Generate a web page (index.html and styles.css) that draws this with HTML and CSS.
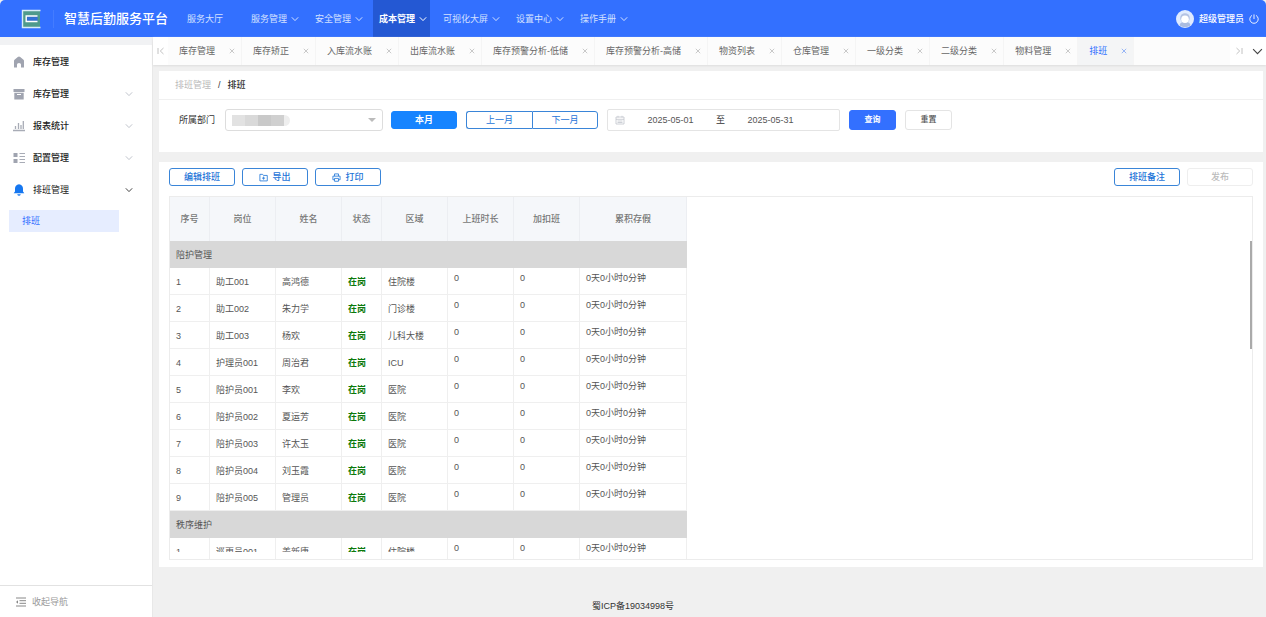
FILE: index.html
```html
<!DOCTYPE html>
<html lang="zh-CN">
<head>
  <meta charset="UTF-8">
  <meta name="viewport" content="width=device-width, initial-scale=1.0">
  <title>智慧后勤服务平台</title>
  <link rel="stylesheet" href="styles.css">
</head>
<body>
  <svg class="symbols" aria-hidden="true">
    <symbol id="down" viewBox="0 0 8 8"><path d="M0.8 2.3 4 5.6 7.2 2.3" fill="none" stroke="currentColor"/></symbol>
    <symbol id="close" viewBox="0 0 6 6"><path d="M0.8 0.8 5.2 5.2M5.2 0.8 0.8 5.2" fill="none" stroke="currentColor" stroke-width="0.8"/></symbol>
  </svg>
  <header class="header">
    <svg class="logo" viewBox="0 0 20 20">
      <rect x="2" y="2" width="17" height="16" fill="#4e9a8c"/>
      <path d="M19.5 1.5H1.5V18.5H19.5" fill="none" stroke="#d8ecf8" stroke-width="1.4"/>
      <path d="M16.5 7H5.2V12.5H16.5" fill="#3471c8" stroke="#fff" stroke-width="1.4"/>
      <path d="M7 9.8H16.5" stroke="#3471e8"/>
    </svg>
    <h1 class="title">智慧后勤服务平台</h1>
    <nav class="nav">
      <a href="#">服务大厅</a>
      <a href="#">服务管理<svg class="arrow"><use href="#down"/></svg></a>
      <a href="#">安全管理<svg class="arrow"><use href="#down"/></svg></a>
      <a href="#" class="active">成本管理<svg class="arrow"><use href="#down"/></svg></a>
      <a href="#">可视化大屏<svg class="arrow"><use href="#down"/></svg></a>
      <a href="#">设置中心<svg class="arrow"><use href="#down"/></svg></a>
      <a href="#">操作手册<svg class="arrow"><use href="#down"/></svg></a>
    </nav>
    <div class="user">
      <svg class="avatar" viewBox="0 0 18 18">
        <circle cx="9" cy="9" r="9" fill="#dfebff"/>
        <path d="M3.5 15.5Q4 11.8 9 11.8T14.5 15.5Q9 19 3.5 15.5Z" fill="#a9bbe0"/>
        <circle cx="9" cy="8" r="4.8" fill="#b4c3e3"/>
        <circle cx="9" cy="9.2" r="3.8" fill="#fff"/>
      </svg>
      <span>超级管理员</span>
      <button class="power" aria-label="退出">
        <svg viewBox="0 0 10 10"><path d="M3 1.4A4.2 4.2 0 1 0 7 1.4M5 0.4V5" fill="none" stroke="#fff" stroke-width="0.9"/></svg>
      </button>
    </div>
  </header>

  <div class="body">
    <aside class="side">
      <ul class="menu">
        <li><a href="#">
          <svg class="icon" viewBox="0 0 12 12"><path d="M6 0.5Q6.6 0.5 7.2 1L10.5 3.8Q11 4.2 11 5V11.5H8V8.5Q8 7 6 7T4 8.5V11.5H1V5Q1 4.2 1.5 3.8L4.8 1Q5.4 0.5 6 0.5Z" fill="#a0a4b0"/></svg>库存管理</a></li>
        <li><a href="#">
          <svg class="icon" viewBox="0 0 12 12"><path d="M0.5 1H11.5V4H0.5ZM1.3 4.8H10.7V11.5H1.3Z" fill="#a0a4b0"/><path d="M4 6.5H8" stroke="#fff"/></svg>库存管理<svg class="arrow"><use href="#down"/></svg></a></li>
        <li><a href="#">
          <svg class="icon" viewBox="0 0 12 12"><path d="M0 10.5H12M2.5 9V6M5.5 9V3M8 9V5M10.3 9V1" fill="none" stroke="#a8acb6" stroke-width="1.3"/></svg>报表统计<svg class="arrow"><use href="#down"/></svg></a></li>
        <li><a href="#">
          <svg class="icon" viewBox="0 0 12 12"><path d="M0.5 1H4.5V5H0.5ZM0.5 7H4.5V11H0.5Z" fill="#a0a4b0"/><path d="M6.5 1.5H12M6.5 4.5H12M6.5 7.5H12M6.5 10.5H12" stroke="#a8acb6"/></svg>配置管理<svg class="arrow"><use href="#down"/></svg></a></li>
        <li class="open"><a href="#">
          <svg class="icon" viewBox="0 0 12 12"><path d="M6 0.3C8.6 0.6 10 2.3 10 4.8V7.5L11.3 9.3H0.7L2 7.5V4.8C2 2.3 3.4 0.6 6 0.3ZM4.2 10.2H7.8Q7.3 11.8 6 11.8T4.2 10.2Z" fill="#1677f0"/></svg>排班管理<svg class="arrow"><use href="#down"/></svg></a></li>
      </ul>
      <a href="#" class="sub">排班</a>
      <button class="fold">
        <svg viewBox="0 0 12 10"><path d="M1 1H11M4.5 3.7H11M4.5 6.3H11M1 9H11" stroke="#888"/><path d="M3 3.2V6.8L1 5Z" fill="#888"/></svg>收起导航
      </button>
    </aside>

    <main class="main">
      <div class="tabs">
        <button class="tab-prev" aria-label="向前"><svg viewBox="0 0 8 8"><path d="M1 1V7M6.5 1 3.3 4 6.5 7" fill="none" stroke="#bbb" stroke-width="0.9"/></svg></button>
        <a href="#" class="tab">库存管理<svg><use href="#close"/></svg></a>
        <a href="#" class="tab">库存矫正<svg><use href="#close"/></svg></a>
        <a href="#" class="tab">入库流水账<svg><use href="#close"/></svg></a>
        <a href="#" class="tab">出库流水账<svg><use href="#close"/></svg></a>
        <a href="#" class="tab">库存预警分析-低储<svg><use href="#close"/></svg></a>
        <a href="#" class="tab">库存预警分析-高储<svg><use href="#close"/></svg></a>
        <a href="#" class="tab">物资列表<svg><use href="#close"/></svg></a>
        <a href="#" class="tab">仓库管理<svg><use href="#close"/></svg></a>
        <a href="#" class="tab">一级分类<svg><use href="#close"/></svg></a>
        <a href="#" class="tab">二级分类<svg><use href="#close"/></svg></a>
        <a href="#" class="tab">物料管理<svg><use href="#close"/></svg></a>
        <a href="#" class="tab current">排班<svg><use href="#close"/></svg></a>
        <button class="tab-next" aria-label="向后"><svg viewBox="0 0 8 8"><path d="M7 1V7M1.5 1 4.7 4 1.5 7" fill="none" stroke="#bbb" stroke-width="0.9"/></svg></button>
        <button class="tab-more" aria-label="更多"><svg viewBox="0 0 8 8"><path d="M0.8 2.3 4 5.6 7.2 2.3" fill="none" stroke="#444" stroke-width="0.8"/></svg></button>
      </div>

      <section class="card search">
        <div class="crumb"><a href="#">排班管理</a><span>/</span><b>排班</b></div>
        <form class="filter">
          <label for="dept">所属部门</label>
          <div class="select">
            <select id="dept"><option></option></select>
            <span class="mask"><i></i><i></i><i></i><i></i><i></i></span>
          </div>
          <button type="button" class="btn month">本月</button>
          <div class="group">
            <button type="button" class="btn">上一月</button>
            <button type="button" class="btn">下一月</button>
          </div>
          <div class="range">
            <svg viewBox="0 0 10 10"><path d="M1 2H9V9H1ZM1 4.3H9M3 0.8V2.5M7 0.8V2.5M2.5 6H7.5M2.5 7.5H7.5" fill="none" stroke="#c0c4cc" stroke-width="0.8"/></svg>
            <input type="text" value="2025-05-01" aria-label="开始日期">
            <span>至</span>
            <input type="text" value="2025-05-31" aria-label="结束日期">
          </div>
          <button type="button" class="query">查询</button>
          <button type="button" class="query reset">重置</button>
        </form>
      </section>

      <section class="card content">
        <div class="tools">
          <button class="btn">编辑排班</button>
          <button class="btn"><svg viewBox="0 0 10 10"><path d="M1 1.5H4L5 2.7H9.2V8.8H1ZM5.1 4V7.4M3.4 5.7H6.8" fill="none" stroke="currentColor" stroke-width="0.9"/></svg>导出</button>
          <button class="btn"><svg viewBox="0 0 10 10"><path d="M2.8 3.5V1H7.2V3.5M2.8 7.5H1V3.5H9V7.5H7.2M2.8 6H7.2V9.2H2.8Z" fill="none" stroke="currentColor" stroke-width="0.9"/></svg>打印</button>
          <button class="btn note">排班备注</button>
          <button class="btn" disabled>发布</button>
        </div>
        <div class="table-box">
          <table class="table">
            <colgroup>
              <col class="w-s"><col class="w-m"><col class="w-m"><col class="w-s"><col class="w-m"><col class="w-m"><col class="w-m"><col class="w-l">
            </colgroup>
            <thead>
              <tr><th>序号</th><th>岗位</th><th>姓名</th><th>状态</th><th>区域</th><th>上班时长</th><th>加扣班</th><th>累积存假</th></tr>
            </thead>
            <tbody>
              <tr class="type"><td colspan="8">陪护管理</td></tr>
              <tr><td>1</td><td>助工001</td><td>高鸿德</td><td class="on">在岗</td><td>住院楼</td><td class="num">0</td><td class="num">0</td><td class="num">0天0小时0分钟</td></tr>
              <tr><td>2</td><td>助工002</td><td>朱力学</td><td class="on">在岗</td><td>门诊楼</td><td class="num">0</td><td class="num">0</td><td class="num">0天0小时0分钟</td></tr>
              <tr><td>3</td><td>助工003</td><td>杨欢</td><td class="on">在岗</td><td>儿科大楼</td><td class="num">0</td><td class="num">0</td><td class="num">0天0小时0分钟</td></tr>
              <tr><td>4</td><td>护理员001</td><td>周治君</td><td class="on">在岗</td><td>ICU</td><td class="num">0</td><td class="num">0</td><td class="num">0天0小时0分钟</td></tr>
              <tr><td>5</td><td>陪护员001</td><td>李欢</td><td class="on">在岗</td><td>医院</td><td class="num">0</td><td class="num">0</td><td class="num">0天0小时0分钟</td></tr>
              <tr><td>6</td><td>陪护员002</td><td>夏运芳</td><td class="on">在岗</td><td>医院</td><td class="num">0</td><td class="num">0</td><td class="num">0天0小时0分钟</td></tr>
              <tr><td>7</td><td>陪护员003</td><td>许太玉</td><td class="on">在岗</td><td>医院</td><td class="num">0</td><td class="num">0</td><td class="num">0天0小时0分钟</td></tr>
              <tr><td>8</td><td>陪护员004</td><td>刘玉霞</td><td class="on">在岗</td><td>医院</td><td class="num">0</td><td class="num">0</td><td class="num">0天0小时0分钟</td></tr>
              <tr><td>9</td><td>陪护员005</td><td>管理员</td><td class="on">在岗</td><td>医院</td><td class="num">0</td><td class="num">0</td><td class="num">0天0小时0分钟</td></tr>
              <tr class="type"><td colspan="8">秩序维护</td></tr>
              <tr class="cut"><td><span>1</span></td><td><span>巡更员001</span></td><td><span>姜新唐</span></td><td class="on"><span>在岗</span></td><td><span>住院楼</span></td><td class="num">0</td><td class="num">0</td><td class="num">0天0小时0分钟</td></tr>
            </tbody>
          </table>
          <div class="thumb"></div>
        </div>
      </section>
      <footer class="footer">蜀ICP备19034998号</footer>
    </main>
  </div>
</body>
</html>
```

FILE: styles.css
```css
*{
  box-sizing: border-box;
}

body{
  display: flex;
  flex-direction: column;
  height: 100vh;
  margin: 0;
  overflow: hidden;
  font: 9px/14px "Liberation Sans", "Noto Sans CJK SC", sans-serif;
  color: #333;
  background-color: #f0f0f0;
}

a{
  color: inherit;
  text-decoration: none;
}

ul{
  padding: 0;
  margin: 0;
  list-style: none;
}

button, input, select{
  padding: 0;
  margin: 0;
  border: 0;
  background: none;
  font: inherit;
  color: inherit;
}

.symbols{
  position: absolute;
  width: 0;
  height: 0;
}

.arrow{
  width: 8px;
  height: 8px;
}

/* 顶部 */
.header{
  display: flex;
  flex: none;
  align-items: center;
  height: 37px;
  padding: 0 7px 0 21px;
  border-radius: 5px 5px 0 0;
  background-color: #3370ff;
  color: #fff;
}

.logo{
  width: 20px;
  height: 20px;
}

.title{
  margin: 0 0 0 12px;
  padding-left: 10px;
  border-left: 1px solid #447cff;
  font-size: 13px;
  line-height: 18px;
  font-weight: 500;
}

.nav{
  display: flex;
  gap: 7px;
  height: 100%;
  margin-left: 13px;
}

.nav a{
  display: flex;
  align-items: center;
  gap: 4px;
  min-width: 57px;
  padding: 0 3px 0 6px;
  color: #d3e1ff;
}

.nav .active{
  background-color: #2458d3;
  color: #fff;
  font-weight: bold;
}

.user{
  display: flex;
  align-items: center;
  gap: 5px;
  margin-left: auto;
  font-weight: 500;
}

.avatar{
  width: 18px;
  height: 18px;
}

.power, .power svg{
  display: block;
  width: 10px;
  height: 10px;
}

.body{
  display: flex;
  flex: 1;
  min-height: 0;
}

/* 左侧菜单 */
.side{
  display: flex;
  flex: none;
  flex-direction: column;
  width: 153px;
  border-top: 8px solid #f1f2f4;
  border-right: 1px solid #e8e8e8;
  background-color: #fff;
}

.menu{
  padding-top: 1px;
}

.menu a{
  display: flex;
  align-items: center;
  height: 32px;
  padding: 0 19px 0 13px;
  color: #222;
  font-weight: 500;
}

.menu .icon{
  width: 12px;
  height: 12px;
  margin-right: 8px;
}

.menu .arrow{
  margin-left: auto;
  color: #c0c4cc;
}

.menu .open a{
  font-weight: normal;
}

.menu .open .arrow{
  color: #444;
}

.sub{
  height: 22px;
  margin: 4px 33px 0 9px;
  padding-left: 13px;
  line-height: 22px;
  background-color: #e6edff;
  color: #3370ff;
}

.fold{
  display: flex;
  align-items: center;
  gap: 5px;
  height: 32px;
  margin-top: auto;
  padding-left: 15px;
  border-top: 1px solid #e2e2e2;
  color: #999;
}

.fold svg{
  width: 12px;
  height: 10px;
}

/* 标签页 */
.main{
  display: flex;
  flex: 1;
  flex-direction: column;
  min-width: 0;
}

.tabs{
  display: flex;
  flex: none;
  height: 28px;
  background-color: #fcfcfc;
  box-shadow: 0 1px 2px #ddd;
}

.tabs svg{
  width: 6px;
  height: 6px;
  color: #bbb;
}

.tab{
  display: flex;
  align-items: center;
  gap: 14px;
  padding: 0 6px 0 11px;
  border-right: 1px solid #f5f5f5;
  color: #666;
  white-space: nowrap;
}

.tabs .current{
  background-color: #f4f5f6;
  color: #3370ff;
}

.tabs .current svg{
  color: #7fa5f5;
}

.tabs button{
  display: flex;
  flex: none;
  align-items: center;
  justify-content: center;
  width: 18px;
  background-color: #fff;
}

.tabs button svg{
  width: 8px;
  height: 8px;
}

.tabs .tab-prev{
  width: 15px;
}

.tabs .tab-next{
  margin-left: auto;
}

.tabs .tab-more svg{
  width: 11px;
  height: 11px;
}

/* 查询 */
.card{
  margin: 0 3px 0 6px;
  background-color: #fff;
}

.search{
  flex: none;
  height: 81px;
  margin-top: 6px;
}

.crumb{
  display: flex;
  gap: 7px;
  height: 29px;
  padding-left: 16px;
  border-bottom: 1px solid #f0f0f0;
  line-height: 28px;
}

.crumb a{
  color: #bbb;
}

.crumb b{
  font-weight: 500;
}

.filter{
  display: flex;
  align-items: center;
  height: 40px;
  padding-left: 20px;
}

.select{
  position: relative;
  width: 158px;
  height: 22px;
  margin: 0 8px 0 10px;
}

.select select{
  width: 100%;
  height: 100%;
  border: 1px solid #ddd;
  border-radius: 3px;
  appearance: none;
}

.select::after{
  content: "";
  position: absolute;
  top: 9px;
  right: 7px;
  border: 4px solid transparent;
  border-top-color: #bbb;
}

.mask{
  display: flex;
  position: absolute;
  top: 6px;
  left: 7px;
}

.mask i{
  width: 13px;
  height: 11px;
  background-color: #e2e2e2;
}

.mask i:nth-child(2){
  background-color: #d9d9d9;
}

.mask i:nth-child(3){
  background-color: #c9c9c9;
}

.mask i:nth-child(4){
  background-color: #d0d0d0;
}

.mask i:nth-child(5){
  width: 6px;
  border-radius: 0 6px 6px 0;
  background-color: #eee;
}

.btn{
  display: flex;
  align-items: center;
  justify-content: center;
  gap: 4px;
  width: 66px;
  height: 18px;
  border: 1px solid #3a85d8;
  border-radius: 3px;
  background-color: #fff;
  color: #1d74d8;
  font-weight: 500;
}

.btn svg{
  width: 9px;
  height: 9px;
}

.month{
  border-color: #1684ff;
  background-color: #1684ff;
  color: #fff;
  font-weight: bold;
}

.group{
  display: flex;
  margin: 0 9px;
}

.group .btn{
  font-weight: normal;
}

.group .btn:first-child{
  border-right: 0;
  border-radius: 3px 0 0 3px;
}

.group .btn:last-child{
  border-radius: 0 3px 3px 0;
}

.range{
  display: flex;
  align-items: center;
  width: 233px;
  height: 22px;
  padding-left: 7px;
  border: 1px solid #e4e4e4;
  border-radius: 2px;
}

.range svg{
  width: 10px;
  height: 10px;
}

.range input{
  width: 91px;
  color: #555;
  text-align: center;
}

.query{
  width: 47px;
  height: 20px;
  margin-left: 9px;
  border: 1px solid #3370ff;
  border-radius: 3px;
  background-color: #3370ff;
  color: #fff;
  font-size: 8px;
  font-weight: bold;
}

.reset{
  border-color: #e4e4e4;
  background-color: #fff;
  color: #555;
  font-weight: 500;
}

/* 排班表 */
.content{
  display: flex;
  flex: 1;
  flex-direction: column;
  min-height: 0;
  margin-top: 10px;
  padding: 6px 10px 7px;
}

.tools{
  display: flex;
  gap: 7px;
  padding-bottom: 10px;
}

.tools .note{
  margin-left: auto;
}

.tools .btn:disabled{
  border-color: #eee;
  color: #bbb;
}

.table-box{
  position: relative;
  flex: 1;
  min-height: 0;
  overflow: hidden;
  border: 1px solid #ececec;
}

.table{
  width: 517px;
  border-collapse: separate;
  border-spacing: 0;
  table-layout: fixed;
}

.w-s{
  width: 40px;
}

.w-m{
  width: 66px;
}

.w-l{
  width: 107px;
}

.table th{
  height: 44px;
  padding: 0;
  border-right: 1px solid #eceef2;
  background-color: #f5f7fa;
  color: #777;
  font-weight: 500;
}

.table td{
  height: 27px;
  padding: 1px 0 0 6px;
  border-right: 1px solid #efefef;
  border-bottom: 1px solid #efefef;
  color: #555;
}

.table .num{
  padding-top: 3px;
  vertical-align: top;
}

.table .type td{
  border-color: #d8d8d8;
  background-color: #d8d8d8;
}

.table .on{
  color: #0b7a0b;
  font-weight: bold;
}

.cut td{
  vertical-align: top;
}

/* 固定列在滚动条上方截断 */
.cut span{
  display: block;
  height: 13px;
  overflow: hidden;
  line-height: 27px;
}

.thumb{
  position: absolute;
  top: 44px;
  right: 0;
  width: 2px;
  height: 108px;
  background-color: #aaa;
}

.footer{
  flex: none;
  height: 50px;
  padding: 31px 153px 0 0;
  text-align: center;
  line-height: 16px;
}
```
